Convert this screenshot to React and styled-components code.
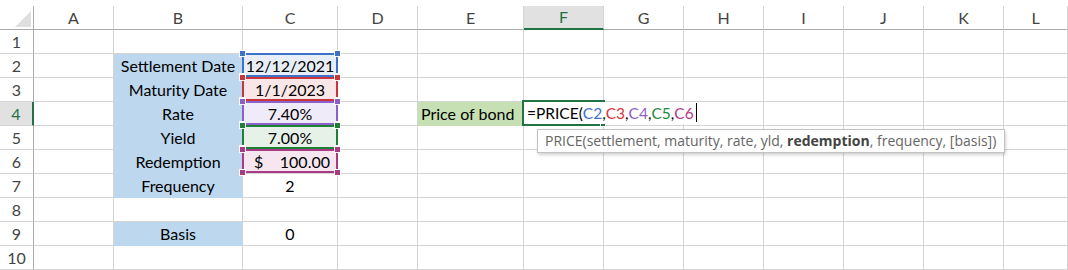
import React from "react";
import styled, { createGlobalStyle, css } from "styled-components";

const GlobalStyle = createGlobalStyle`
  html, body { margin: 0; padding: 0; background: #ffffff; }
  body { font-family: Lato, "Liberation Sans", sans-serif; }
`;

const GRID = "#d4d4d4";
const HEAD_LINE = "#ababab";
const EXCEL_GREEN = "#217346";
const BLUE_FILL = "#bdd7ee";
const GREEN_FILL = "#c6e0b4";

const COLS = ["A", "B", "C", "D", "E", "F", "G", "H", "I", "J", "K", "L"];
const ROWS = [1, 2, 3, 4, 5, 6, 7, 8, 9, 10];

const REFS = {
  C2: { line: "#3d72c8", tint: "#e8eef8", text: "#3d72c8" },
  C3: { line: "#c8353d", tint: "#f9e6e6", text: "#d9343c" },
  C4: { line: "#8c5fc9", tint: "#f0ebf8", text: "#8c5fc9" },
  C5: { line: "#1e7f37", tint: "#e6f2e8", text: "#1e8a3c" },
  C6: { line: "#a83a86", tint: "#f6e6f0", text: "#b03a8a" },
};

const CELLS = {
  B2: { text: "Settlement Date", fill: BLUE_FILL },
  B3: { text: "Maturity Date", fill: BLUE_FILL },
  B4: { text: "Rate", fill: BLUE_FILL },
  B5: { text: "Yield", fill: BLUE_FILL },
  B6: { text: "Redemption", fill: BLUE_FILL },
  B7: { text: "Frequency", fill: BLUE_FILL },
  B9: { text: "Basis", fill: BLUE_FILL },
  C2: { text: "12/12/2021" },
  C3: { text: "1/1/2023" },
  C4: { text: "7.40%" },
  C5: { text: "7.00%" },
  C6: { accounting: ["$", "100.00"] },
  C7: { text: "2" },
  C9: { text: "0" },
  E4: { text: "Price of bond", fill: GREEN_FILL, align: "left" },
};

const Sheet = styled.div`
  position: relative;
  display: grid;
  grid-template-columns: 34px 80px 129px 95px 80px 106px repeat(6, 80px) 1fr;
  grid-template-rows: 30px repeat(10, 24px);
  width: 1068px;
  height: 270px;
  overflow: hidden;
  background: #ffffff;
  font-family: Lato, "Liberation Sans", sans-serif;
  font-size: 16px;
  color: #000000;
`;

const Corner = styled.div`
  margin-top: 6px;
  display: flex;
  justify-content: flex-end;
  align-items: flex-end;
  padding: 0 2px 2px 0;
  border-right: 1px solid ${HEAD_LINE};
  border-bottom: 1px solid ${HEAD_LINE};
`;

const ColHeader = styled.div`
  margin-top: 6px;
  display: flex;
  align-items: center;
  justify-content: center;
  border-right: 1px solid ${GRID};
  border-bottom: 1px solid ${HEAD_LINE};
  color: #444444;
  font-size: 16px;
  line-height: 1;
  ${(p) =>
    p.$active &&
    css`
      background: #e1e1e1;
      color: ${EXCEL_GREEN};
      border-bottom: 2px solid ${EXCEL_GREEN};
    `}
`;

const RowHeader = styled.div`
  display: flex;
  align-items: center;
  justify-content: center;
  border-right: 1px solid ${HEAD_LINE};
  border-bottom: 1px solid ${GRID};
  color: #444444;
  font-size: 16px;
  line-height: 1;
  ${(p) =>
    p.$active &&
    css`
      background: #e1e1e1;
      color: ${EXCEL_GREEN};
      border-right: 2px solid ${EXCEL_GREEN};
    `}
`;

const Cell = styled.div`
  position: relative;
  display: flex;
  align-items: flex-end;
  justify-content: ${(p) =>
    p.$align === "left" ? "flex-start" : p.$align === "spread" ? "space-between" : "center"};
  padding: ${(p) => (p.$align === "spread" ? "0 7px 2px 11px" : "0 3px 2px")};
  line-height: 19px;
  white-space: nowrap;
  background: ${(p) => p.$fill || "transparent"};
  border-right: 1px solid ${(p) => p.$fill || GRID};
  border-bottom: 1px solid ${(p) => p.$fill || GRID};
`;

const RefBox = styled.div`
  position: absolute;
  left: -1px;
  top: -1px;
  width: 96px;
  height: 24px;
  box-shadow: inset 0 0 0 2px ${(p) => p.$color};
  pointer-events: none;
  z-index: 1;
`;

const RefHandle = styled.span`
  position: absolute;
  width: 5px;
  height: 5px;
  background: ${(p) => p.$color};
  border: 1px solid #ffffff;
  ${(p) => (p.$v === "top" ? "top: -3px;" : "bottom: -3px;")}
  ${(p) => (p.$h === "left" ? "left: -3px;" : "right: -3px;")}
`;

const EditFrame = styled.div`
  position: absolute;
  left: -2px;
  top: -2px;
  width: 83px;
  height: 26px;
  box-sizing: border-box;
  border: 2px solid ${EXCEL_GREEN};
  z-index: 2;
`;

const FillHandle = styled.span`
  position: absolute;
  right: -3px;
  bottom: -3px;
  width: 4px;
  height: 4px;
  background: ${EXCEL_GREEN};
  border: 1px solid #ffffff;
  z-index: 4;
`;

const EditBox = styled.div`
  position: absolute;
  left: 0;
  top: 0;
  width: 178px;
  height: 22px;
  display: flex;
  align-items: flex-end;
  padding: 0 0 1px 3px;
  box-sizing: border-box;
  background: #ffffff;
  font-size: 15.5px;
  line-height: 19px;
  white-space: nowrap;
  z-index: 3;
`;

const Ref = styled.span`
  color: ${(p) => p.$color};
`;

const Caret = styled.span`
  display: inline-block;
  width: 1px;
  height: 19px;
  margin: 0 0 1px 2px;
  background: #000000;
`;

const Tooltip = styled.div`
  position: absolute;
  left: 537px;
  top: 129px;
  width: 468px;
  height: 24px;
  box-sizing: border-box;
  display: flex;
  align-items: center;
  padding: 0 0 1px 7px;
  background: #ffffff;
  border: 1px solid #c3c3c3;
  box-shadow: 1px 2px 3px rgba(0, 0, 0, 0.18);
  font-family: "Open Sans", "Noto Sans", sans-serif;
  font-size: 14px;
  color: #666666;
  white-space: nowrap;
  z-index: 6;
`;

const Strong = styled.b`
  font-weight: 700;
  color: #444444;
`;

function CornerMark() {
  return (
    <svg width="16" height="16" viewBox="0 0 16 16" aria-hidden="true">
      <polygon points="16,0 16,16 0,16" fill="#dfdfdf" />
    </svg>
  );
}

function Formula() {
  return (
    <>
      <span>=PRICE(</span>
      <Ref $color={REFS.C2.text}>C2</Ref>,
      <Ref $color={REFS.C3.text}>C3</Ref>,
      <Ref $color={REFS.C4.text}>C4</Ref>,
      <Ref $color={REFS.C5.text}>C5</Ref>,
      <Ref $color={REFS.C6.text}>C6</Ref>
      <Caret />
    </>
  );
}

function renderCell(col, row) {
  const key = `${col}${row}`;
  const data = CELLS[key] || {};
  const ref = REFS[key];
  const align = data.accounting ? "spread" : data.align;
  return (
    <Cell
      key={key}
      $fill={data.fill}
      $align={align}
      style={ref ? { background: ref.tint } : undefined}
    >
      {data.accounting ? (
        <>
          <span>{data.accounting[0]}</span>
          <span>{data.accounting[1]}</span>
        </>
      ) : (
        data.text
      )}
      {ref && (
        <RefBox $color={ref.line}>
          <RefHandle $color={ref.line} $v="top" $h="left" />
          <RefHandle $color={ref.line} $v="top" $h="right" />
          <RefHandle $color={ref.line} $v="bottom" $h="left" />
          <RefHandle $color={ref.line} $v="bottom" $h="right" />
        </RefBox>
      )}
      {key === "F4" && (
        <>
          <EditFrame>
            <FillHandle />
          </EditFrame>
          <EditBox>
            <Formula />
          </EditBox>
        </>
      )}
    </Cell>
  );
}

export default function App() {
  return (
    <>
      <GlobalStyle />
      <Sheet>
        <Corner>
          <CornerMark />
        </Corner>
        {COLS.map((c) => (
          <ColHeader key={c} $active={c === "F"}>
            {c}
          </ColHeader>
        ))}
        {ROWS.map((r) => (
          <React.Fragment key={r}>
            <RowHeader $active={r === 4}>{r}</RowHeader>
            {COLS.map((c) => renderCell(c, r))}
          </React.Fragment>
        ))}
        <Tooltip>
          PRICE(settlement, maturity, rate, yld,&nbsp;<Strong>redemption</Strong>, frequency, [basis])
        </Tooltip>
      </Sheet>
    </>
  );
}
